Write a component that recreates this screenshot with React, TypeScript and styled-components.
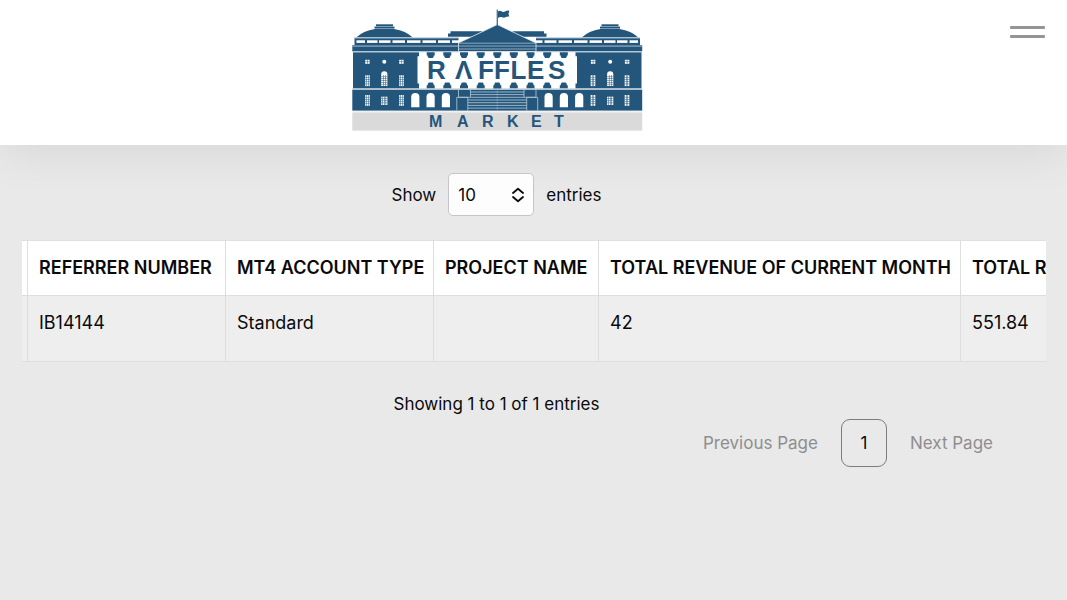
import React from "react";
import styled, { createGlobalStyle } from "styled-components";

const NAVY = "#24567c";
const PALE = "#b9cbd8";

const GlobalStyle = createGlobalStyle`
  *, *::before, *::after { box-sizing: border-box; }
  body {
    margin: 0;
    background: #e9e9e9;
    color: #0a0a0a;
    font-family: Inter, "Liberation Sans", sans-serif;
    font-size: 17px;
    line-height: 24px;
  }
`;

const Header = styled.header`
  display: grid;
  grid-template-columns: 1fr 74px;
  align-items: start;
  height: 145px;
  background: #fff;
  box-shadow: 0 8px 48px rgba(0, 0, 0, 0.08);
`;

const LogoLink = styled.a`
  justify-self: center;
  margin-top: 8px;
  svg { display: block; }
`;

const MenuButton = styled.button`
  display: flex;
  flex-direction: column;
  gap: 6px;
  justify-self: end;
  margin: 18px 14px 0 0;
  padding: 8px;
  border: 0;
  background: none;
`;

const MenuLine = styled.span`
  width: 35px;
  height: 3px;
  border-radius: 1px;
  background: #959595;
`;

const Controls = styled.div`
  padding-right: 74px;
`;

const LengthRow = styled.div`
  display: flex;
  justify-content: center;
  align-items: center;
  gap: 12px;
  padding: 28px 0 24px;
`;

const SelectBox = styled.span`
  position: relative;
  display: flex;
`;

const LengthSelect = styled.select`
  appearance: none;
  width: 86px;
  height: 43px;
  padding: 0 32px 0 9px;
  border: 1px solid #c4c4ca;
  border-radius: 5px;
  background: #fdfdfd;
  color: inherit;
  font: inherit;
`;

const SelectArrows = styled.svg`
  position: absolute;
  right: 10px;
  top: 14px;
  pointer-events: none;
`;

const TableScroller = styled.div`
  margin: 0 21px 0 22px;
  overflow: hidden;
`;

const Table = styled.table`
  border-collapse: separate;
  border-spacing: 0;
  white-space: nowrap;
  border-top: 1px solid #e0e0e0;
  font-size: 18px;
`;

const HeadCell = styled.th<{ $width: number }>`
  min-width: ${(p) => p.$width}px;
  max-width: ${(p) => p.$width}px;
  height: 55px;
  padding: 0 0 0 11px;
  border-left: 1px solid #dedede;
  border-bottom: 1px solid #dedede;
  background: #fff;
  text-align: left;
  font-weight: 600;
`;

const Cell = styled.td`
  height: 66px;
  padding: 15px 11px;
  border-left: 1px solid #dedede;
  border-bottom: 1px solid #dedede;
  background: #eee;
  vertical-align: top;
`;

const EdgeHead = styled.td`
  min-width: 5px;
  padding: 0;
  background: #fff;
  border-bottom: 1px solid #dedede;
`;

const EdgeCell = styled(EdgeHead)`
  background: #eee;
`;

const Info = styled.p`
  margin: 30px 0 3px;
  text-align: center;
`;

const Pager = styled.nav`
  display: flex;
  justify-content: flex-end;
  align-items: center;
  gap: 23px;
`;

const PagerButton = styled.button<{ $current?: boolean }>`
  min-width: ${(p) => (p.$current ? "46px" : "0")};
  height: 48px;
  padding: 0;
  border: ${(p) => (p.$current ? "1px solid #7c7c7e" : "0")};
  border-radius: 9px;
  background: none;
  color: ${(p) => (p.$current ? "#0a0a0a" : "#8e8e90")};
  font: inherit;
`;

const columns = [
  { title: "REFERRER NUMBER", value: "IB14144", width: 198 },
  { title: "MT4 ACCOUNT TYPE", value: "Standard", width: 208 },
  { title: "PROJECT NAME", value: "", width: 165 },
  { title: "TOTAL REVENUE OF CURRENT MONTH", value: "42", width: 362 },
  { title: "TOTAL REVENUE", value: "551.84", width: 180 },
];

const corniceWindows = [
  [356.5, 8.5], [367, 10.5], [379, 11.5], [392.5, 12.5],
  [407, 13.5], [422.5, 13.5], [438, 12], [452, 8],
];

/* A paned window: a white opening crossed by dark glazing bars. */
function PanedWindow({ x, y, w, h, cols, rows }: { x: number; y: number; w: number; h: number; cols: number; rows: number }) {
  return (
    <g>
      <rect x={x} y={y} width={w} height={h} fill="#fff" />
      {Array.from({ length: cols - 1 }, (_, i) => (
        <rect key={`c${i}`} x={x + ((i + 1) * w) / cols - 0.25} y={y} width={0.5} height={h} fill={NAVY} />
      ))}
      {Array.from({ length: rows - 1 }, (_, i) => (
        <rect key={`r${i}`} x={x} y={y + ((i + 1) * h) / rows - 0.25} width={w} height={0.5} fill={NAVY} />
      ))}
    </g>
  );
}

/* The head and foot of a column, seen against the white panel. */
function ColumnEnds({ x }: { x: number }) {
  return (
    <g>
      <path d={`M${x - 4} 52.3 h8 v3.2 h-1 v1.2 l-1 1.2 h-4 l-1 -1.2 v-1.2 h-1 Z`} />
      <path d={`M${x - 4} 88.5 h8 v-3.2 h-1 v-1.4 l-1 -1.4 h-4 l-1 1.4 v1.4 h-1 Z`} />
    </g>
  );
}

function Wing() {
  return (
    <g fill={NAVY}>
      <rect x="376" y="24.3" width="17" height="2" />
      <rect x="374.5" y="26.6" width="20" height="2" />
      <path d="M356.5 37.3 Q363 30.8 375 29 H394 Q406 31 412.5 37.3 Z" />
      <path d="M450.5 31.2 H482 V36.8 H448 V33.5 H450.5 Z" />
      <rect x="354.5" y="37.8" width="104" height="7.4" />
      <rect x="354.5" y="37.7" width="104" height="0.7" fill={PALE} />
      {corniceWindows.map(([x, w]) => (
        <rect key={x} x={x} y="40.3" width={w} height="2.6" fill="#fff" />
      ))}
      <rect x="352.3" y="45.2" width="107" height="6.2" />
      <rect x="352.3" y="45.8" width="107" height="0.7" fill={PALE} />
      <path d="M353 52.3 H419 V56.3 H417.5 V83.5 H419 V88.5 H353 Z" />
      <rect x="353" y="51.3" width="106" height="0.9" fill={PALE} />
      {[430.7, 447.3, 464, 480.7].map((x) => (
        <ColumnEnds key={x} x={x} />
      ))}
      <rect x="352.3" y="89.6" width="145" height="21" />
      <rect x="352.3" y="88.4" width="145" height="1" fill={PALE} />
      {[365.2, 399.2].map((x) => (
        <g key={x}>
          <PanedWindow x={x} y={59.8} w={4.4} h={4} cols={2} rows={2} />
          <PanedWindow x={x} y={75.3} w={4.6} h={10.8} cols={3} rows={5} />
          <PanedWindow x={x} y={95} w={4.6} h={10.8} cols={3} rows={5} />
        </g>
      ))}
      <circle cx="384.3" cy="61.8" r="2" fill="#fff" />
      <path d="M381.2 75 V74.3 A3.1 3.1 0 0 1 387.4 74.3 V75 Z" fill="#fff" />
      <PanedWindow x={381.2} y={75} w={6.2} h={11} cols={3} rows={6} />
      <PanedWindow x={381.2} y={96.7} w={6.2} h={8.3} cols={4} rows={4} />
      {[411.2, 426.5, 441.8].map((x) => (
        <path key={x} d={`M${x} 107.3 V97 a4.1 4.1 0 0 1 8.2 0 V107.3 Z`} fill="#fff" />
      ))}
      <g fill="none" stroke={PALE} strokeWidth="0.8">
        <path d="M458.5 89.5 V97.3 H470.5 V89.5 M456.8 110.5 V97.3 H467.8 V110.5" />
        <path d="M470.5 92 H498 M470.5 94.6 H498 M470.5 97.3 H498 M468 100 H498 M468 102.7 H498 M468 105.4 H498 M468 108.1 H498" />
      </g>
    </g>
  );
}

function Logo() {
  return (
    <svg width="292" height="124" viewBox="351 8 292 124" role="img" aria-label="Raffles Market">
      <rect x="352.3" y="111" width="289.9" height="1.2" fill="#eef2f5" />
      <rect x="352.3" y="112.4" width="289.9" height="18.2" fill="#dadada" />
      <Wing />
      <g transform="translate(994.5 0) scale(-1 1)">
        <Wing />
      </g>
      <g fill={NAVY}>
        <ColumnEnds x={497.3} />
        <path d="M497.3 24.6 L458.5 43 V51.5 H536 V43 Z" stroke="#e6edf2" strokeWidth="0.8" />
        <path d="M458.5 43.2 H536 M458.5 46 H536 M458.5 49 H536" stroke={PALE} strokeWidth="0.7" />
        <rect x="496.7" y="9.6" width="1.1" height="16" />
        <path d="M498 11.4 C500.5 9.4 502 13 505 11.6 C506.5 10.6 508 10.4 509.3 10.8 L508.5 14 L509.3 16.6 C506.5 15.6 505.5 18.4 502.5 17.4 C500.8 16.7 499.5 16.7 498 18 Z" />
      </g>
      <text
        x="427 455 478 494 510.5 527 548"
        y="79"
        fill={NAVY}
        fontFamily="Liberation Sans, sans-serif"
        fontSize="26"
        fontWeight="700"
      >
        RΛFFLES
      </text>
      <text
        x="429 457 482 507 531 554"
        y="127"
        fill={NAVY}
        fontFamily="Liberation Sans, sans-serif"
        fontSize="16"
        fontWeight="700"
      >
        MARKET
      </text>
    </svg>
  );
}

export default function App() {
  return (
    <>
      <GlobalStyle />
      <Header>
        <LogoLink href="#">
          <Logo />
        </LogoLink>
        <MenuButton type="button" aria-label="Open menu">
          <MenuLine />
          <MenuLine />
        </MenuButton>
      </Header>
      <main>
        <Controls>
          <LengthRow>
            <label htmlFor="page-length">Show</label>
            <SelectBox>
              <LengthSelect id="page-length" defaultValue="10">
                <option>10</option>
                <option>25</option>
                <option>50</option>
                <option>100</option>
              </LengthSelect>
              <SelectArrows width="12" height="16" viewBox="0 0 12 16" fill="none" stroke="#0a0a0a" strokeWidth="1.8" strokeLinecap="round" strokeLinejoin="round">
                <path d="M1 6 L6 1.8 L11 6 M1 10 L6 14.2 L11 10" />
              </SelectArrows>
            </SelectBox>
            <span>entries</span>
          </LengthRow>
        </Controls>
        <TableScroller>
          <Table>
            <thead>
              <tr>
                <EdgeHead />
                {columns.map((c) => (
                  <HeadCell key={c.title} $width={c.width} scope="col">{c.title}</HeadCell>
                ))}
              </tr>
            </thead>
            <tbody>
              <tr>
                <EdgeCell />
                {columns.map((c) => (
                  <Cell key={c.title}>{c.value}</Cell>
                ))}
              </tr>
            </tbody>
          </Table>
        </TableScroller>
        <Controls>
          <Info>Showing 1 to 1 of 1 entries</Info>
          <Pager aria-label="Table pages">
            <PagerButton type="button">Previous Page</PagerButton>
            <PagerButton type="button" $current aria-current="page">1</PagerButton>
            <PagerButton type="button">Next Page</PagerButton>
          </Pager>
        </Controls>
      </main>
    </>
  );
}
